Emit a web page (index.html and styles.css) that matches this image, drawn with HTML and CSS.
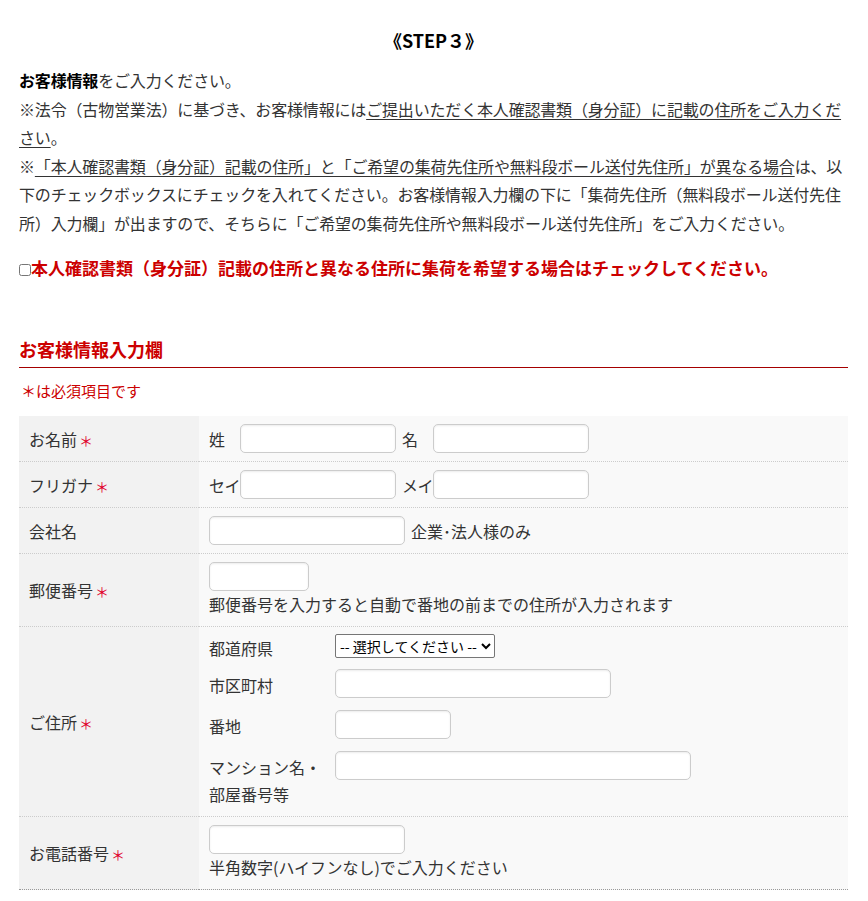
FILE: index.html
```html
<!DOCTYPE html>
<html lang="ja">
<head>
    <meta charset="UTF-8">
    <meta name="viewport" content="width=device-width, initial-scale=1.0">
    <title>STEP3 お客様情報</title>
    <link rel="stylesheet" href="styles.css">
</head>
<body>
    <div class="page">
        <h2 class="step-title">《STEP３》</h2>

        <p class="intro">
            <strong>お客様情報</strong>をご入力ください。<br>
            ※法令（古物営業法）に基づき、お客様情報には<u>ご提出いただく本人確認書類（身分証）に記載の住所をご入力ください</u>。<br>
            ※<u>「本人確認書類（身分証）記載の住所」と「ご希望の集荷先住所や無料段ボール送付先住所」が異なる場合</u>は、以下のチェックボックスにチェックを入れてください。お客様情報入力欄の下に「集荷先住所（無料段ボール送付先住所）入力欄」が出ますので、そちらに「ご希望の集荷先住所や無料段ボール送付先住所」をご入力ください。
        </p>

        <label class="diff-check">
            <input type="checkbox" id="diff-address">本人確認書類（身分証）記載の住所と異なる住所に集荷を希望する場合はチェックしてください。
        </label>

        <h3 class="section-title">お客様情報入力欄</h3>
        <p class="required-note">＊は必須項目です</p>

        <table class="form-table">
            <tr>
                <th>お名前<span class="req">＊</span></th>
                <td>
                    <div class="name-fields">
                        <span class="name-label">姓</span>
                        <input type="text" class="input-name">
                        <span class="name-label">名</span>
                        <input type="text" class="input-name">
                    </div>
                </td>
            </tr>
            <tr>
                <th>フリガナ<span class="req">＊</span></th>
                <td>
                    <div class="name-fields">
                        <span class="name-label">セイ</span>
                        <input type="text" class="input-name">
                        <span class="name-label">メイ</span>
                        <input type="text" class="input-name">
                    </div>
                </td>
            </tr>
            <tr>
                <th>会社名</th>
                <td>
                    <div class="name-fields">
                        <input type="text" class="input-company">
                        <span>企業･法人様のみ</span>
                    </div>
                </td>
            </tr>
            <tr>
                <th>郵便番号<span class="req">＊</span></th>
                <td>
                    <input type="text" class="input-zip">
                    <div class="hint">郵便番号を入力すると自動で番地の前までの住所が入力されます</div>
                </td>
            </tr>
            <tr>
                <th>ご住所<span class="req">＊</span></th>
                <td class="address-cell">
                    <div class="addr-row addr-row-pref">
                        <span class="addr-label">都道府県</span>
                        <select class="pref-select">
                            <option>-- 選択してください --</option>
                        </select>
                    </div>
                    <div class="addr-row">
                        <span class="addr-label">市区町村</span>
                        <input type="text" class="input-city">
                    </div>
                    <div class="addr-row">
                        <span class="addr-label">番地</span>
                        <input type="text" class="input-banchi">
                    </div>
                    <div class="addr-row">
                        <span class="addr-label">マンション名・部屋番号等</span>
                        <input type="text" class="input-building">
                    </div>
                </td>
            </tr>
            <tr>
                <th>お電話番号<span class="req">＊</span></th>
                <td>
                    <input type="text" class="input-tel">
                    <div class="hint">半角数字(ハイフンなし)でご入力ください</div>
                </td>
            </tr>
        </table>
    </div>
</body>
</html>
```

FILE: styles.css
```css
body {
    margin: 0;
    background-color: #ffffff;
    color: #333333;
    font-family: "Noto Sans CJK JP", "Noto Sans", sans-serif;
    font-size: 16px;
}

.page {
    padding: 26px 20px 0 19px;
}

.step-title {
    margin: 0 0 12px;
    font-size: 18px;
    line-height: 28px;
    text-align: center;
    color: #000000;
}

.intro {
    margin: 0;
    line-height: 28.5px;
    letter-spacing: -0.17px;
}

.intro strong {
    color: #000000;
}

.intro u {
    text-underline-offset: 3px;
}

/* red notice with checkbox */
.diff-check {
    display: block;
    margin-top: 17px;
    color: #cc0000;
    font-size: 17px;
    font-weight: bold;
    line-height: 28px;
}

.diff-check input {
    width: 12px;
    height: 12px;
    margin: 0;
    vertical-align: -1px;
}

.section-title {
    margin: 53px 0 0;
    padding-bottom: 4px;
    border-bottom: 1px solid #a50000;
    color: #cc0000;
    font-size: 18px;
    line-height: 28px;
}

.required-note {
    margin: 11px 0 13px 2px;
    color: #cc0000;
    font-size: 15px;
    line-height: 24px;
}

.form-table {
    width: 100%;
    border-collapse: collapse;
}

.form-table th {
    width: 160px;
    padding: 0 10px;
    background-color: #f2f2f2;
    font-weight: normal;
    text-align: left;
    vertical-align: middle;
    border-bottom: 1px dotted #cccccc;
}

.form-table td {
    padding: 8px 10px;
    background-color: #f9f9f9;
    line-height: 28px;
    border-bottom: 1px dotted #cccccc;
}

.form-table tr:last-child th,
.form-table tr:last-child td {
    border-bottom-color: #999999;
}

.req {
    color: #e0002a;
    font-size: 14px;
    margin-left: 2px;
}

input[type="text"] {
    display: block;
    height: 29px;
    padding: 0 6px;
    border: 1px solid #cccccc;
    border-radius: 5px;
    background-color: #ffffff;
    box-shadow: inset 0 1px 2px rgba(0, 0, 0, 0.08);
    box-sizing: border-box;
    font-size: 15px;
}

.name-fields {
    display: flex;
    align-items: center;
}

.name-label {
    width: 31px;
    flex-shrink: 0;
    white-space: nowrap;
    letter-spacing: -0.5px;
}

.input-name {
    width: 156px;
    margin-right: 6px;
}

.input-company {
    width: 196px;
    margin-right: 6px;
}

.input-zip {
    width: 100px;
}

.input-tel {
    width: 196px;
}

.hint {
    line-height: 27px;
}

.address-cell {
    padding-top: 7px !important;
}

.addr-row {
    display: flex;
    align-items: flex-start;
    margin-bottom: 11px;
}

.addr-row:last-child {
    margin-bottom: 0;
}

.addr-label {
    width: 120px;
    margin-right: 6px;
    padding-top: 3px;
    line-height: 27px;
    flex-shrink: 0;
}

.addr-row-pref {
    margin-bottom: 9px;
}

.addr-row-pref .addr-label {
    padding-top: 2px;
    line-height: 24px;
}

.pref-select {
    width: 160px;
    height: 24px;
    border: 1px solid #767676;
    border-radius: 2px;
    background-color: #ffffff;
    color: #000000;
    font-family: "Noto Sans CJK JP", sans-serif;
    font-size: 14px;
}

.input-city {
    width: 276px;
}

.input-banchi {
    width: 116px;
}

.input-building {
    width: 356px;
}
```
